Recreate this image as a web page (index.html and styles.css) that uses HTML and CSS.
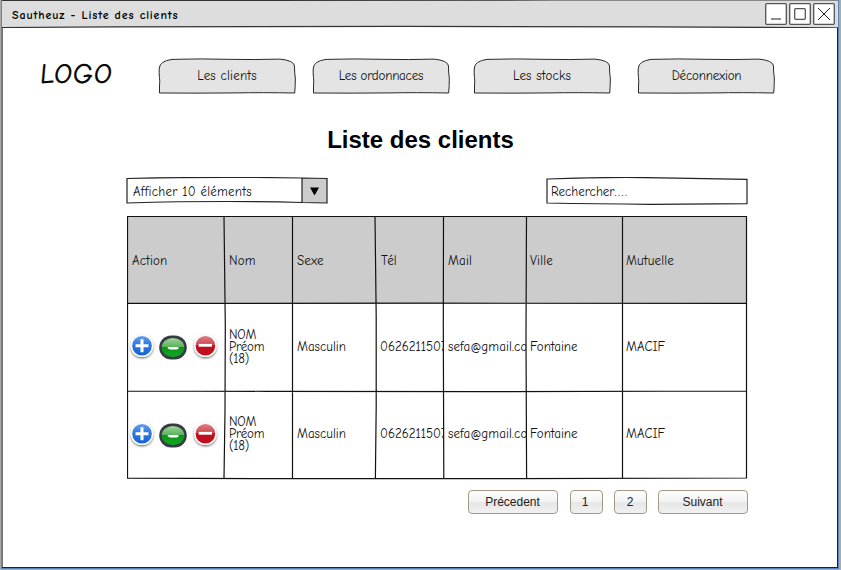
FILE: index.html
```html
<!DOCTYPE html>
<html lang="fr">
<head>
<meta charset="utf-8">
<title>Sautheuz - Liste des clients</title>
<link rel="stylesheet" href="styles.css">
</head>
<body>
<svg class="defs" width="0" height="0" aria-hidden="true">
  <defs>
    <linearGradient id="blue" x2="0" y2="1"><stop offset="0" stop-color="#65a0ed"/><stop offset=".45" stop-color="#2f78df"/><stop offset="1" stop-color="#1261d9"/></linearGradient>
    <linearGradient id="red" x2="0" y2="1"><stop offset="0" stop-color="#e07d83"/><stop offset=".47" stop-color="#ca4850"/><stop offset=".5" stop-color="#bd101d"/><stop offset="1" stop-color="#c30e20"/></linearGradient>
    <linearGradient id="green" x2="0" y2="1"><stop offset="0" stop-color="#9fd89c"/><stop offset=".45" stop-color="#5cb25c"/><stop offset=".5" stop-color="#0c9418"/><stop offset="1" stop-color="#0cab20"/></linearGradient>
    <filter id="shadow" x="-20%" y="-20%" width="140%" height="150%"><feDropShadow dx="0" dy="1.2" stdDeviation="1" flood-opacity=".6"/></filter>
    <symbol id="tab" viewBox="0 0 138 36"><path d="M1.500 35V28C2.500 22 .5 17 1.300 10Q2 3 14 1.400Q43 .5 69 1.300Q97 1.900 122 1.100Q136 2.500 136.500 8Q136.400 14 137.300 20Q137.400 27 136.700 35Q103 34.400 79 34.900Q40 35.300 1.500 35Z" fill="#e4e4e4" stroke="#292929"/></symbol>
    <symbol id="actions" viewBox="0 0 96 36">
      <g filter="url(#shadow)"><circle cx="15" cy="16.700" r="11.300" fill="#fff"/><circle cx="78.400" cy="16.700" r="11.300" fill="#fff"/></g>
      <circle cx="15" cy="16.700" r="9.800" fill="url(#blue)"/><path d="M8.500 16.800H21.500M15 10.200V23.200" stroke="#fff" stroke-width="3"/>
      <rect x="32.200" y="6.500" width="27.600" height="24" rx="12" fill="#363b46"/><ellipse cx="46" cy="18.500" rx="11.300" ry="9.600" fill="url(#green)"/><path d="M41 18H51L52 19.200L50 20.600H43L40.500 19.300Z" fill="#fff"/>
      <circle cx="78.400" cy="16.700" r="9.800" fill="url(#red)"/><path d="M71.700 16.300H85" stroke="#fff" stroke-width="2.800"/>
    </symbol>
  </defs>
</svg>
<div class="window">
  <header class="titlebar">
    <svg class="outline" viewBox="0 0 836 28"><path d="M0 .5H190L550 0H836M0 27.500L110 26.900L400 26.400L650 26.900L836 27.800" fill="none" stroke="#333" stroke-width="1.200"/></svg>
    <span class="window-title">Sautheuz - Liste des clients</span>
    <svg class="controls" width="70" height="23" viewBox="0 0 70 23" fill="none"><g fill="#fff" stroke="#555" stroke-width="1.300"><rect x=".7" y=".7" width="20.600" height="20.600" rx="1"/><rect x="24.700" y=".7" width="20.600" height="20.600" rx="1"/><rect x="48.700" y=".7" width="20.600" height="20.600" rx="1"/><rect x="29.700" y="5.700" width="10.600" height="10.600" rx="1"/></g><path d="M6 16H16" stroke="#666" stroke-width="1.500"/><path d="M53 5L65 17M65 5L53 17" stroke="#000" stroke-width=".9"/></svg>
  </header>
  <nav class="nav">
    <span class="logo">LOGO</span>
    <a class="tab t1"><svg><use href="#tab"/></svg><span>Les clients</span></a>
    <a class="tab t2"><svg><use href="#tab"/></svg><span>Les ordonnaces</span></a>
    <a class="tab t3"><svg><use href="#tab"/></svg><span>Les stocks</span></a>
    <a class="tab t4"><svg><use href="#tab"/></svg><span>Déconnexion</span></a>
  </nav>
  <h1>Liste des clients</h1>
  <main class="content">
    <div class="filters">
      <div class="select"><svg viewBox="0 0 202 27"><path d="M1 1.500Q85 -.4 176 1L201 1.400V26L176 25.500Q95 23.300 1 26Z" fill="#fff"/><path d="M176 1L201 1.500V26L176 25.500Z" fill="#ccc"/><path d="M1 1.500Q85 -.4 176 1L201 1.500V26L176 25.500Q95 23.300 1 26ZM176 1V25.500" fill="none" stroke="#222" stroke-width="1.200"/><path d="M184 10.500H193L188.500 18.500Z"/></svg><span>Afficher 10 éléments</span></div>
      <div class="search"><svg viewBox="0 0 202 28"><path d="M1 2Q60 -.2 115 .8L201 2.300V26.700L105 27.300Q50 27 1 26Z" fill="#fff" stroke="#222" stroke-width="1.200"/></svg><span>Rechercher<span class="dots">....</span></span></div>
    </div>
    <div class="table">
      <div class="row head"><span>Action</span><span>Nom</span><span>Sexe</span><span>Tél</span><span>Mail</span><span>Ville</span><span class="mut">Mutuelle</span></div>
      <div class="row"><span class="act"><svg width="96" height="36"><use href="#actions"/></svg></span><span class="name">NOM<br>Préom<br>(18)</span><span class="sex">Masculin</span><span class="tel">0626211507</span><span class="mail">sefa@gmail.com</span><span class="city">Fontaine</span><span class="macif">MACIF</span></div>
      <div class="row last"><span class="act"><svg width="96" height="36"><use href="#actions"/></svg></span><span class="name">NOM<br>Préom<br>(18)</span><span class="sex">Masculin</span><span class="tel">0626211507</span><span class="mail">sefa@gmail.com</span><span class="city">Fontaine</span><span class="macif">MACIF</span></div>
      <svg class="rules" viewBox="0 0 621 264" fill="none" stroke="#111" stroke-width="1.200"><path d="M.5 .5H619.500V262L390 262.700L160 262.700L.5 262.200ZM97 .5L98.300 110L98 195L97 262M165.500 .5V262.500M248 .5L249.200 100V190L248.400 262.500M316.500 .5L316.300 110L316.800 262.500M399.500 .5L399 120L399.600 262.500M495.500 .5V262.500M.5 87.400L300 87.200L619.500 87.400M.5 175L140 175.300L360 175.700L619.500 175"/></svg>
    </div>
    <div class="pager"><button class="wide">Précedent</button><button class="one">1</button><button>2</button><button class="wide">Suivant</button></div>
  </main>
</div>
</body>
</html>
```
FILE: styles.css
```css
* { box-sizing: border-box; }
body {
  margin: 0;
  width: 841px;
  height: 570px;
  padding: 0 2px 1px 1px;
  overflow: hidden;
  background: #aaa;
  color: #111;
  font: 13px/16px "Comic Sans MS", "Comic Neue", Lato, sans-serif;
}
.defs { position: absolute; }
.window {
  width: 838px;
  height: 569px;
  background: #fff;
  border: solid #5686b8;
  border-width: 0 1px 1px;
  box-shadow: inset -1px -1px #222, inset 1px 0 #777;
}
.titlebar {
  display: grid;
  grid-template-columns: 1fr 70px;
  height: 28px;
  padding: 3px 3px 0 10px;
  position: relative;
  background: linear-gradient(#ddd 27px, #fff 27px);
}
.outline { position: absolute; inset: 0; width: 836px; height: 28px; }
.window-title {
  position: relative;
  font-weight: 900;
  font-size: 12px;
  line-height: 24px;
  letter-spacing: .87px;
  color: #000;
}
.controls { position: relative; }
.nav { display: flex; height: 66px; padding: 30px 0 0 38px; }
.logo {
  width: 118px;
  font-size: 28px;
  line-height: 33px;
  letter-spacing: .9px;
  color: #000;
  -webkit-text-stroke: .4px #000;
  transform: skewX(-5deg);
}
.tab { display: grid; width: 138px; height: 36px; margin-right: 16px; }
.tab > *, .select > *, .search > * { grid-area: 1 / 1; }
.tab svg { width: 138px; height: 36px; }
.tab span { place-self: center; }
.t1 span { letter-spacing: .2px; }
.t2 { margin-right: 23px; }
.t2 span { letter-spacing: -.2px; }
.t3 { margin-right: 26px; }
.t3 span { letter-spacing: .2px; }
.t4 span { letter-spacing: -.2px; padding-left: 1px; }
h1 {
  margin: 32px 0 0 1px;
  font: bold 24px/28px "Liberation Sans", Arial, sans-serif;
  text-align: center;
  color: #000;
}
.content { width: 622px; margin: 23px 0 0 124px; }
.filters { display: flex; justify-content: space-between; height: 39px; }
.select, .search { display: grid; width: 202px; height: 28px; align-items: start; }
.select svg { width: 202px; height: 27px; }
.search svg { width: 202px; height: 28px; }
.select > span { padding: 7px 0 0 7px; letter-spacing: .25px; }
.search > span { padding: 7px 0 0 5px; }
.dots { letter-spacing: 1.500px; }
.table { position: relative; width: 621px; height: 264px; margin-left: 1px; }
.row {
  display: grid;
  grid-template-columns: 97px 68px 84px 67px 83px 96px 124px;
  height: 87.500px;
  width: 619px;
  align-items: center;
}
.row > span { padding-left: 5px; white-space: nowrap; overflow: hidden; }
.row > .act { padding: 0; height: 36px; }
.row > .tel, .row > .city, .row > .macif, .row > .mut,
.head > :nth-child(6) { padding-left: 4px; }
.head { background: #ccc; }
.head > span { padding-top: 2px; letter-spacing: .15px; }
.row > .name { line-height: 12px; letter-spacing: -.2px; overflow: visible; }
.last > span { margin-bottom: 1px; }
.last > .act { margin: 1px 0 0; }
.mail { letter-spacing: .1px; }
.rules { position: absolute; inset: 0; width: 621px; height: 264px; }
.pager { display: flex; gap: 11px; justify-content: flex-end; margin-top: 10px; }
button {
  width: 33px;
  height: 24px;
  padding: 0 1px 0 0;
  border: 1px solid #a39885;
  border-radius: 4px;
  background: linear-gradient(#fcfcfc 10%, #f2f2f2 50%, #e6e6e6 53%, #f1f1f1);
  font: 12px "Liberation Sans", Arial, sans-serif;
  color: #222;
}
.one { margin-left: 1px; padding-right: 3px; }
.wide { width: 90px; }
```
